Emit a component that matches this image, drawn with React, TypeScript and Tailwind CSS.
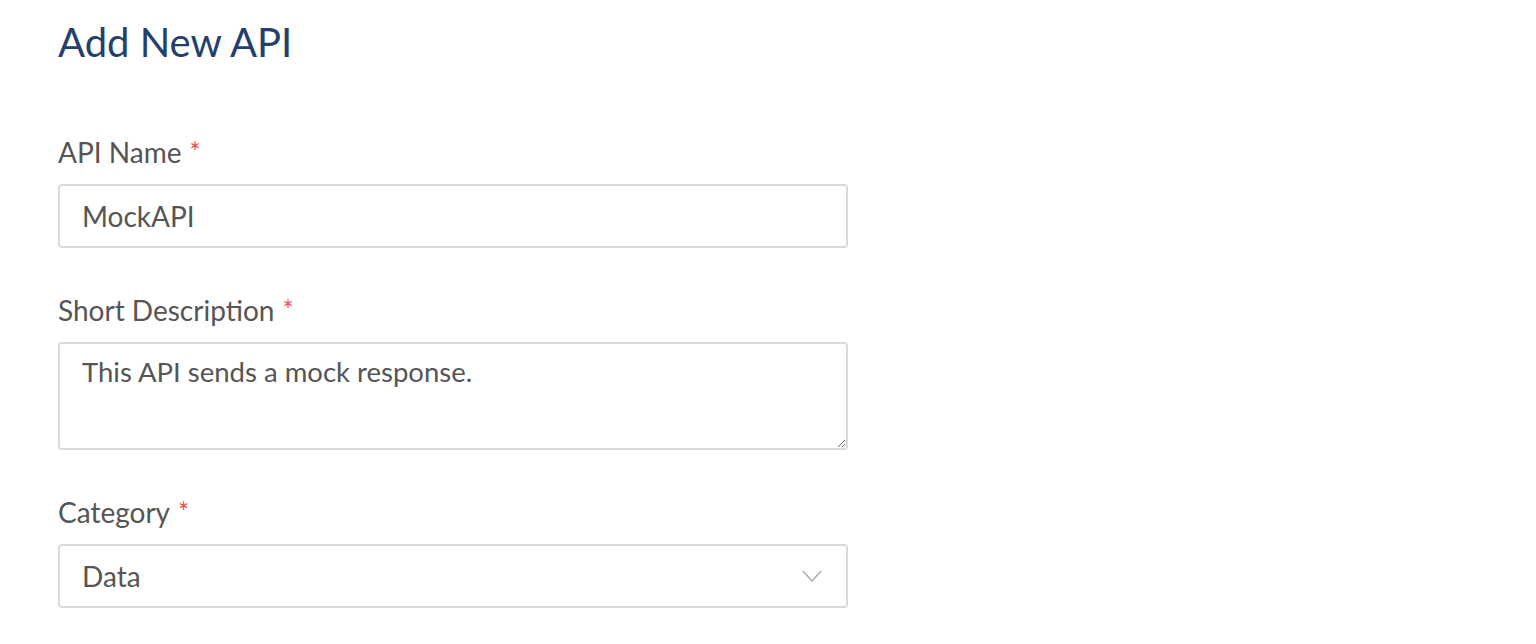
function Label({ text }: { text: string }) {
  return (
    <label className="flex h-[32px] items-center text-[28px] leading-[32px] text-[#555555]">
      {text}
      <span className="ml-[8px] text-[26px] leading-none text-[#e0504a]">*</span>
    </label>
  );
}

export default function App() {
  return (
    <div className="min-h-screen bg-white font-['Lato','Noto_Sans',sans-serif] pl-[58px] pt-[20px]">
      <h1 className="text-[40px] leading-[44px] text-[#243f6b]">Add New API</h1>

      <div className="mt-[72px] flex w-[790px] flex-col gap-[46px]">
        <div>
          <Label text="API Name" />
          <input
            readOnly
            value="MockAPI"
            className="mt-[16px] block h-[64px] w-full rounded-[4px] border-2 border-[#dadada] px-[22px] text-[28px] text-[#555555] outline-none"
          />
        </div>

        <div>
          <Label text="Short Description" />
          <textarea
            readOnly
            value="This API sends a mock response."
            className="mt-[16px] block h-[108px] w-full rounded-[4px] border-2 border-[#dadada] px-[22px] py-[10px] text-[27.5px] leading-[36px] text-[#555555] outline-none"
          />
        </div>

        <div>
          <Label text="Category" />
          <div className="mt-[16px] flex h-[64px] w-full items-center justify-between rounded-[4px] border-2 border-[#dadada] pl-[22px] pr-[24px] text-[28px] text-[#555555]">
            <span>Data</span>
            <svg width="20" height="12" viewBox="0 0 20 12" fill="none">
              <polyline points="1,1 10,11 19,1" stroke="#b3b3b3" strokeWidth="1.6" />
            </svg>
          </div>
        </div>
      </div>
    </div>
  );
}
